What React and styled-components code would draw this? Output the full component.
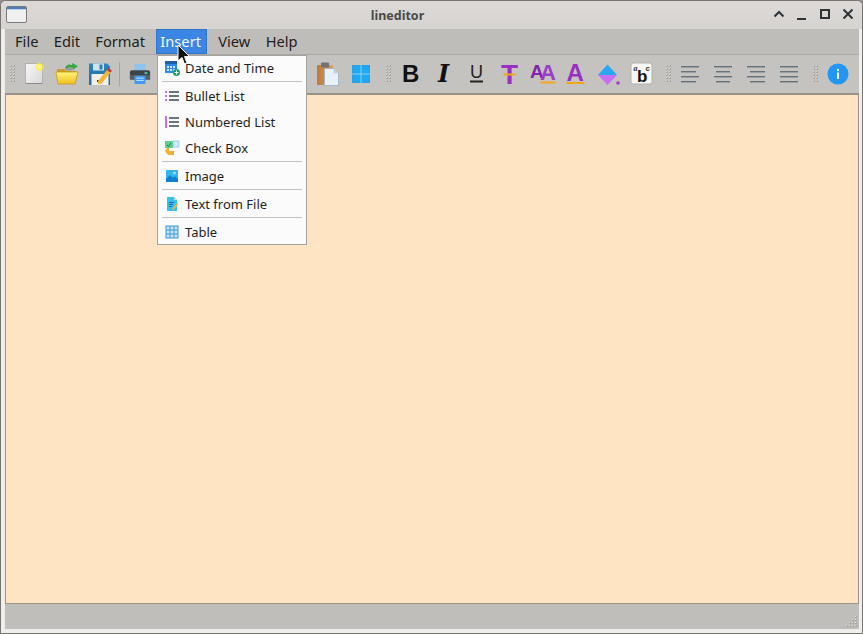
import styled, { createGlobalStyle } from 'styled-components';

const GlobalStyle = createGlobalStyle`
	html, body {
		margin: 0;
		padding: 0;
		background: #8f8e8c;
	}
	body {
		font-family: 'Noto Sans', sans-serif;
	}
`;

const Window = styled.div`
	position: relative;
	box-sizing: border-box;
	width: 863px;
	height: 634px;
	display: flex;
	flex-direction: column;
	background: #efeeec;
	border: 1px solid #77756f;
	border-radius: 6px 6px 0 0;
	overflow: hidden;
`;

const TitleBar = styled.div`
	position: relative;
	flex: none;
	height: 28px;
	display: flex;
	align-items: center;
	justify-content: space-between;
	padding: 0 7px 2px 5px;
	box-sizing: border-box;
	background: linear-gradient(#dcd9d6, #d6d3d0);
`;

const Title = styled.div`
	position: absolute;
	left: 0;
	right: 68px;
	top: 6px;
	text-align: center;
	font-size: 12.5px;
	line-height: 17px;
	font-weight: 700;
	color: #4a4a48;
`;

const WindowButtons = styled.div`
	display: flex;
	align-items: center;
	gap: 9px;
`;

const Body = styled.div`
	flex: 1;
	min-height: 0;
	display: flex;
	flex-direction: column;
	margin: 0 3px 4px 4px;
`;

const MenuBar = styled.div`
	flex: none;
	box-sizing: border-box;
	height: 26px;
	display: flex;
	align-items: flex-start;
	gap: 7.3px;
	padding: 0 0 0 6px;
	background: #bfbdb9;
	border-bottom: 1px solid #a9a8a4;
`;

const MenuTitle = styled.div`
	box-sizing: border-box;
	height: 25px;
	padding: 0 ${(p) => (p.$active ? '6px' : '4px')} 0 4px;
	font-size: 14.67px;
	line-height: 25px;
	color: ${(p) => (p.$active ? '#f4f8fd' : '#1d1d1c')};
	background: ${(p) => (p.$active ? '#3a86e2' : 'transparent')};
	box-shadow: ${(p) => (p.$active ? 'inset 0 0 0 1px #2f75c9' : 'none')};
`;

const ToolBar = styled.div`
	flex: none;
	box-sizing: border-box;
	height: 39px;
	display: flex;
	align-items: center;
	padding: 0 0 1px 0;
	background: #c5c3bf;
	border-bottom: 1px solid #93928e;
`;

const GripBox = styled.div`
	flex: none;
	width: ${(p) => p.$width || 16}px;
	height: 18px;
	padding-left: ${(p) => p.$offset || 8}px;
	box-sizing: border-box;
	display: flex;
`;

const ToolButton = styled.div`
	flex: none;
	width: 33px;
	height: 33px;
	display: flex;
	align-items: center;
	justify-content: center;
`;

const ToolSeparator = styled.div`
	flex: none;
	width: 7px;
	height: 24px;
	display: flex;
	justify-content: center;
	&::before {
		content: '';
		width: 1px;
		background: #a5a4a0;
	}
`;

const HiddenGroup = styled.div`
	flex: none;
	width: 155px;
`;

const Editor = styled.div`
	flex: 1;
	min-height: 0;
	background: #ffe4c4;
	border: 1px solid #9c9286;
`;

const StatusBar = styled.div`
	position: relative;
	flex: none;
	height: 25px;
	background: #c0bebb;
`;

const SizeGrip = styled.div`
	position: absolute;
	right: 1px;
	bottom: 0;
	width: 13px;
	height: 13px;
	display: flex;
`;

const PopupMenu = styled.div`
	position: absolute;
	left: 156px;
	top: 54px;
	box-sizing: border-box;
	width: 150px;
	height: 190px;
	background: #fbfbfb;
	border: 1px solid #a3a2a0;
	display: flex;
	flex-direction: column;
`;

const PopupItem = styled.div`
	flex: none;
	box-sizing: border-box;
	height: 26px;
	display: flex;
	align-items: center;
	gap: 5px;
	padding-left: 6px;
	font-size: 13px;
	color: #1f1f1e;
	&:first-child {
		height: 25px;
		padding-bottom: 1px;
	}
	&:last-child {
		height: 25px;
	}
`;

const PopupSeparator = styled.div`
	flex: none;
	height: 2px;
	margin: 0 4px;
	border-top: 1px solid #c2c1bf;
	box-sizing: border-box;
`;

const Cursor = styled.div`
	position: absolute;
	left: 176px;
	top: 43px;
	width: 14px;
	height: 22px;
	display: flex;
`;

const Grip = () => (
	<svg width="7" height="18" viewBox="0 0 7 18">
		{[0, 3, 6, 9, 12, 15].map((y) => (
			<g key={y}>
				<rect x="0" y={y} width="2" height="2" fill="#a9a8a5" />
				<rect x="3" y={y} width="2" height="2" fill="#a9a8a5" />
				<rect x="0" y={y} width="1" height="1" fill="#dcdad7" />
				<rect x="3" y={y} width="1" height="1" fill="#dcdad7" />
			</g>
		))}
	</svg>
);

const AppIcon = () => (
	<svg width="21" height="17" viewBox="0 0 21 17">
		<rect x="0.5" y="0.5" width="20" height="16" rx="1.5" fill="#f0f0f0" stroke="#7b7b7b" />
		<rect x="1" y="1" width="19" height="2" fill="#4a7ebb" />
		<rect x="1" y="3" width="19" height="1" fill="#c7d3e4" />
	</svg>
);

const WinUp = () => (
	<svg width="14" height="14" viewBox="0 0 14 14" fill="none" stroke="#2e3436" strokeWidth="2">
		<path d="M2.5 9.5 L7 5 L11.5 9.5" />
	</svg>
);
const WinMin = () => (
	<svg width="14" height="14" viewBox="0 0 14 14">
		<rect x="2" y="11" width="9" height="2" fill="#2e3436" />
	</svg>
);
const WinMax = () => (
	<svg width="14" height="14" viewBox="0 0 14 14" fill="none" stroke="#2e3436" strokeWidth="2">
		<rect x="3" y="3" width="8" height="8" />
	</svg>
);
const WinClose = () => (
	<svg width="14" height="14" viewBox="0 0 14 14" fill="none" stroke="#2e3436" strokeWidth="2">
		<path d="M2.5 2.5 L11.5 11.5 M11.5 2.5 L2.5 11.5" />
	</svg>
);

const NewIcon = () => (
	<svg width="24" height="24" viewBox="0 0 24 24">
		<defs>
			<linearGradient id="newPage" x1="0" y1="0" x2="1" y2="1">
				<stop offset="0" stopColor="#f8f8f8" />
				<stop offset="1" stopColor="#d8d8d8" />
			</linearGradient>
			<radialGradient id="newGlow">
				<stop offset="0" stopColor="#fffbb0" />
				<stop offset="0.5" stopColor="#fff04a" />
				<stop offset="1" stopColor="#fff04a" stopOpacity="0" />
			</radialGradient>
		</defs>
		<rect x="3.5" y="1.5" width="17" height="20" fill="url(#newPage)" stroke="#b2b2b0" />
		<rect x="4" y="21" width="16" height="1" fill="#8a8a8a" />
		<circle cx="17.5" cy="5" r="5" fill="url(#newGlow)" />
	</svg>
);

const OpenIcon = () => (
	<svg width="24" height="24" viewBox="0 0 24 24">
		<defs>
			<linearGradient id="folder" x1="0" y1="0" x2="0" y2="1">
				<stop offset="0" stopColor="#fff27c" />
				<stop offset="1" stopColor="#f0c020" />
			</linearGradient>
		</defs>
		<path d="M2 7 h7 l2 2 h10 v3 H2 z" fill="#c99e2a" />
		<path d="M10 6 C11 2 15 2 17 3 L17 1 L23 4 L18 8 L18 6 C15 5 13 5 12 8 z" fill="#39a845" />
		<ellipse cx="14" cy="7" rx="4" ry="1.6" fill="#9a9a8e" />
		<path d="M1 10 h22 l-3 12 H3 z" fill="url(#folder)" stroke="#c69a1a" strokeWidth="0.8" />
	</svg>
);

const SaveIcon = () => (
	<svg width="24" height="24" viewBox="0 0 24 24">
		<defs>
			<linearGradient id="disk" x1="0" y1="0" x2="0" y2="1">
				<stop offset="0" stopColor="#2f83bd" />
				<stop offset="1" stopColor="#1f6da3" />
			</linearGradient>
		</defs>
		<path d="M1 1.5 h18 l3 3 V23 H1 z" fill="url(#disk)" />
		<rect x="5" y="1.5" width="11" height="7" fill="#cfe3ef" />
		<rect x="11.5" y="2.5" width="3" height="5" fill="#2f7fb5" />
		<rect x="3.5" y="12" width="17" height="11" fill="#f2f0e6" />
		<rect x="9" y="18" width="2" height="2" fill="#333" />
		<path d="M10 19 L19 8 L22.5 10.5 L13.5 21.5 L10 22 z" fill="#f2b53a" />
		<path d="M19 8 L20.5 6 L24 8.5 L22.5 10.5 z" fill="#c23b32" />
	</svg>
);

const PrintIcon = () => (
	<svg width="22" height="22" viewBox="0 0 24 24">
		<rect x="6" y="1" width="12" height="8" fill="#8ec5ee" />
		<path d="M3 8 h18 a2 2 0 0 1 2 2 v8 H1 v-8 a2 2 0 0 1 2 -2 z" fill="#3c4449" />
		<rect x="1" y="13" width="22" height="5" fill="#555d63" />
		<rect x="17" y="10" width="3" height="2" fill="#4fd1a5" />
		<rect x="6" y="14" width="12" height="9" rx="1" fill="#3d9bf0" />
		<rect x="8" y="16" width="8" height="1" fill="#cfe7fb" />
		<rect x="8" y="18.5" width="8" height="1" fill="#cfe7fb" />
	</svg>
);

const PasteIcon = () => (
	<svg width="24" height="24" viewBox="0 0 24 24">
		<defs>
			<linearGradient id="board" x1="0" y1="0" x2="1" y2="0">
				<stop offset="0" stopColor="#bd7a38" />
				<stop offset="1" stopColor="#dba060" />
			</linearGradient>
		</defs>
		<rect x="1" y="3" width="16" height="20" rx="1" fill="url(#board)" />
		<rect x="5" y="0.5" width="8" height="5" rx="1" fill="#6f7378" />
		<path d="M8.5 6.5 h9 l5 5 v12 h-14 z" fill="#e8f0f8" stroke="#9bb0c6" strokeWidth="0.8" />
		<path d="M17.5 6.5 v5 h5 z" fill="#c5d4e4" />
	</svg>
);

const PanesIcon = () => (
	<svg width="18" height="18" viewBox="0 0 18 18">
		<rect width="18" height="18" fill="#2a9fe8" />
		<rect x="1" y="1" width="7.5" height="7.5" fill="#1fa9f2" />
		<rect x="9.5" y="1" width="7.5" height="7.5" fill="#1fa9f2" />
		<rect x="1" y="9.5" width="7.5" height="7.5" fill="#1fa9f2" />
		<rect x="9.5" y="9.5" width="7.5" height="7.5" fill="#1fa9f2" />
		<path d="M9 0 V18 M0 9 H18" stroke="#86d2f7" strokeWidth="1" />
	</svg>
);

const Glyph = styled.text`
	font-family: ${(p) => p.$family || "'Liberation Sans', sans-serif"};
	font-weight: ${(p) => p.$weight || 700};
	font-style: ${(p) => (p.$italic ? 'italic' : 'normal')};
	font-size: ${(p) => p.$size}px;
	fill: ${(p) => p.$color || '#111'};
`;

// room of 4.5px round the 24px drawing, so the letters stay inside the svg
const GlyphCanvas = ({ children }) => (
	<svg width="33" height="33" viewBox="-4.5 -4.5 33 33">
		{children}
	</svg>
);

const BoldIcon = () => (
	<GlyphCanvas>
		<Glyph x="3.5" y="20" $size={24}>B</Glyph>
	</GlyphCanvas>
);
const ItalicIcon = () => (
	<GlyphCanvas>
		<Glyph x="6.5" y="20" $size={24} $italic $family="'DejaVu Serif', serif">I</Glyph>
	</GlyphCanvas>
);
const UnderlineIcon = () => (
	<GlyphCanvas>
		<Glyph x="5.5" y="16" $size={18} $weight={400} $color="#222">U</Glyph>
		<rect x="5.5" y="19" width="13" height="2" fill="#222" />
	</GlyphCanvas>
);
const StrikeIcon = () => (
	<GlyphCanvas>
		<Glyph x="3.5" y="22" $size={28} $color="#9a2fc4">T</Glyph>
		<rect x="6" y="12" width="12" height="2" fill="#f0a818" />
	</GlyphCanvas>
);
const FontIcon = () => (
	<GlyphCanvas>
		<Glyph x="-0.5" y="16" $size={19} $color="#8424ac">A</Glyph>
		<Glyph x="9.5" y="18" $size={22} $color="#9c3cc8">A</Glyph>
		<rect x="10" y="20" width="15" height="2" fill="#f0a818" />
	</GlyphCanvas>
);
const ColorIcon = () => (
	<GlyphCanvas>
		<Glyph x="3" y="19" $size={24} $color="#9a2fc4">A</Glyph>
		<rect x="3" y="20.5" width="18" height="2" fill="#f0a818" />
	</GlyphCanvas>
);
const FillIcon = () => (
	<svg width="24" height="24" viewBox="0 0 24 24">
		<path d="M1 13 L10.5 2.5 L20 13 z" fill="#29a8f0" />
		<path d="M1 13 L20 13 L10.5 23 z" fill="#c86ef0" />
		<circle cx="21" cy="21" r="1.8" fill="#a838d0" />
	</svg>
);
const FormatIcon = () => (
	<GlyphCanvas>
		<rect x="1.5" y="1.5" width="21" height="21" rx="2.5" fill="#f6f6f4" stroke="#b2b1ad" />
		<Glyph x="4" y="9" $size={8} $italic $color="#333" $family="'Liberation Serif', serif">a</Glyph>
		<Glyph x="7.5" y="20" $size={17}>b</Glyph>
		<Glyph x="16" y="9" $size={8} $color="#333">c</Glyph>
	</GlyphCanvas>
);

const ALIGN_ROWS = {
	left: [[0, 18], [0, 15], [0, 18], [0, 15]],
	center: [[0, 18], [2, 14], [0, 18], [2, 14]],
	right: [[0, 18], [3, 15], [0, 18], [3, 15]],
	justify: [[0, 18], [0, 18], [0, 18], [0, 18]],
};

const AlignIcon = ({ mode }) => (
	<svg width="18" height="18" viewBox="0 0 18 18">
		{ALIGN_ROWS[mode].map(([x, w], i) => (
			<g key={i}>
				<rect x={x} y={i * 5 + 1} width={w} height="1" fill="#687078" />
				<rect x={x} y={i * 5 + 2} width={w} height="1" fill="#99a0a6" />
			</g>
		))}
	</svg>
);

const InfoIcon = () => (
	<svg width="22" height="22" viewBox="0 0 22 22">
		<circle cx="11" cy="11" r="10.5" fill="#2196f3" />
		<rect x="10" y="9.5" width="2" height="6.5" fill="#fff" />
		<rect x="10" y="6" width="2" height="2.2" fill="#fff" />
	</svg>
);

const DateIcon = () => (
	<svg width="16" height="16" viewBox="0 0 16 16">
		<rect x="1" y="1" width="12" height="12" fill="#2f8be6" />
		<rect x="1" y="1" width="12" height="3" fill="#1c5fa8" />
		{[3, 6, 9].map((x) => [6, 9].map((y) => <rect key={`${x}${y}`} x={x} y={y} width="2" height="2" fill="#cfe6fb" />))}
		<circle cx="12.5" cy="12.5" r="3.5" fill="#1b9c6b" />
		<path d="M10.5 12.5 h4 M12.5 10.5 v4" stroke="#fff" strokeWidth="1" />
	</svg>
);

const ListIcon = ({ numbered }) => (
	<svg width="16" height="16" viewBox="0 0 16 16">
		{[3, 7, 11].map((y) => (
			<g key={y}>
				<rect x="1" y={numbered ? y - 1 : y} width="2" height={numbered ? 4 : 2} fill="#c76fe8" />
				<rect x="5" y={y} width="10" height="2" fill="#6a7580" />
			</g>
		))}
	</svg>
);

const CheckIcon = () => (
	<svg width="16" height="16" viewBox="0 0 16 16">
		<rect x="1" y="1" width="8" height="7" fill="#5fd08a" />
		<rect x="9" y="1" width="6" height="6" fill="#cfe8fa" stroke="#7cb6e4" strokeWidth="0.6" />
		<path d="M3 5 l1.5 1.5 L7 3" stroke="#23743f" strokeWidth="1" fill="none" />
		<path d="M3 8 h2 v3 h5 v4 H4 L1 11 z" fill="#f3b02e" />
	</svg>
);

const ImageIcon = () => (
	<svg width="16" height="16" viewBox="0 0 16 16">
		<rect x="2" y="2" width="12" height="12" fill="#34b4f0" />
		<path d="M2 11 L6 7 L9 10 L11 8 L14 11 V14 H2 z" fill="#0f7fd0" />
		<circle cx="10.5" cy="5" r="1.2" fill="#bfe9fb" />
	</svg>
);

const TextFileIcon = () => (
	<svg width="16" height="16" viewBox="0 0 16 16">
		<path d="M3 1 h7 l3 3 v11 H3 z" fill="#39c0ee" />
		<path d="M10 1 v3 h3 z" fill="#a6e3f7" />
		<rect x="5" y="6" width="5" height="1" fill="#136fa8" />
		<rect x="5" y="8" width="4" height="1" fill="#136fa8" />
		<rect x="5" y="10" width="3" height="1" fill="#136fa8" />
		<path d="M8 13 L13 7 L14.5 8 L9.5 14 z" fill="#f2b53a" />
	</svg>
);

const TableIcon = () => (
	<svg width="16" height="16" viewBox="0 0 16 16">
		<rect x="2" y="2" width="12" height="12" fill="#c9e3f6" stroke="#3a9ad9" />
		<path d="M6 2 v12 M10 2 v12 M2 6 h12 M2 10 h12" stroke="#3a9ad9" strokeWidth="1" />
	</svg>
);

const ResizeGrip = () => (
	<svg width="13" height="13" viewBox="0 0 13 13">
		{[[10, 0], [7, 3], [10, 3], [4, 6], [7, 6], [10, 6], [1, 9], [4, 9], [7, 9], [10, 9]].map(([x, y]) => (
			<g key={`${x}-${y}`}>
				<rect x={x} y={y} width="2" height="2" fill="#a8a7a4" />
				<rect x={x} y={y} width="1" height="1" fill="#e2e0dd" />
			</g>
		))}
	</svg>
);

const MousePointer = () => (
	<svg width="14" height="22" viewBox="0 0 14 22">
		<path d="M1 1 V17 L5 13.5 L7.5 20 L10 19 L7.5 12.5 L12.5 12.5 z" fill="#111" stroke="#fff" strokeWidth="1" />
	</svg>
);

const MENU_TITLES = ['File', 'Edit', 'Format', 'Insert', 'View', 'Help'];

const POPUP = [
	{ label: 'Date and Time', icon: <DateIcon /> },
	null,
	{ label: 'Bullet List', icon: <ListIcon /> },
	{ label: 'Numbered List', icon: <ListIcon numbered /> },
	{ label: 'Check Box', icon: <CheckIcon /> },
	null,
	{ label: 'Image', icon: <ImageIcon /> },
	null,
	{ label: 'Text from File', icon: <TextFileIcon /> },
	null,
	{ label: 'Table', icon: <TableIcon /> },
];

export default function App() {
	return (
		<>
			<GlobalStyle />
			<Window>
				<TitleBar>
					<AppIcon />
					<Title>lineditor</Title>
					<WindowButtons>
						<WinUp />
						<WinMin />
						<WinMax />
						<WinClose />
					</WindowButtons>
				</TitleBar>
				<Body>
					<MenuBar>
						{MENU_TITLES.map((title) => (
							<MenuTitle key={title} $active={title === 'Insert'}>
								{title}
							</MenuTitle>
						))}
					</MenuBar>
					<ToolBar>
						<GripBox $width={12} $offset={5}><Grip /></GripBox>
						<ToolButton><NewIcon /></ToolButton>
						<ToolButton><OpenIcon /></ToolButton>
						<ToolButton><SaveIcon /></ToolButton>
						<ToolSeparator />
						<ToolButton><PrintIcon /></ToolButton>
						<HiddenGroup />
						<ToolButton><PasteIcon /></ToolButton>
						<ToolButton><PanesIcon /></ToolButton>
						<GripBox $width={17} $offset={9}><Grip /></GripBox>
						<ToolButton><BoldIcon /></ToolButton>
						<ToolButton><ItalicIcon /></ToolButton>
						<ToolButton><UnderlineIcon /></ToolButton>
						<ToolButton><StrikeIcon /></ToolButton>
						<ToolButton><FontIcon /></ToolButton>
						<ToolButton><ColorIcon /></ToolButton>
						<ToolButton><FillIcon /></ToolButton>
						<ToolButton><FormatIcon /></ToolButton>
						<GripBox $width={15}><Grip /></GripBox>
						<ToolButton><AlignIcon mode="left" /></ToolButton>
						<ToolButton><AlignIcon mode="center" /></ToolButton>
						<ToolButton><AlignIcon mode="right" /></ToolButton>
						<ToolButton><AlignIcon mode="justify" /></ToolButton>
						<GripBox><Grip /></GripBox>
						<ToolButton><InfoIcon /></ToolButton>
					</ToolBar>
					<Editor />
					<StatusBar>
						<SizeGrip><ResizeGrip /></SizeGrip>
					</StatusBar>
				</Body>
				<PopupMenu>
					{POPUP.map((item, i) =>
						item ? (
							<PopupItem key={item.label}>
								{item.icon}
								<span>{item.label}</span>
							</PopupItem>
						) : (
							<PopupSeparator key={i} />
						),
					)}
				</PopupMenu>
				<Cursor><MousePointer /></Cursor>
			</Window>
		</>
	);
}
